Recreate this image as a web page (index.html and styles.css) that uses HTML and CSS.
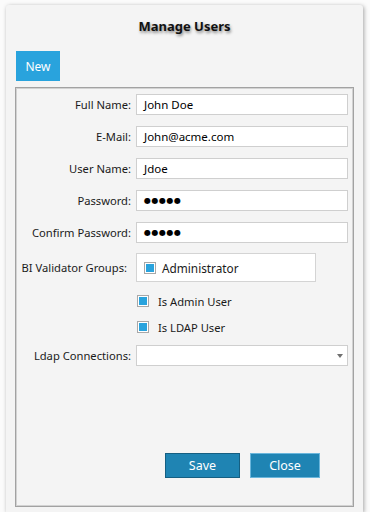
FILE: index.html
```html
<!DOCTYPE html>
<html>
<head>
<meta charset="utf-8">
<link rel="stylesheet" href="styles.css">
</head>
<body>
<div class="window">
  <div class="title">Manage Users</div>
  <div class="toolbar"><button class="btn-new">New</button></div>
  <div class="group">
    <div class="row r1"><label class="lbl">Full Name:</label><div class="input">John Doe</div></div>
    <div class="row r2"><label class="lbl">E-Mail:</label><div class="input">John@acme.com</div></div>
    <div class="row r2"><label class="lbl">User Name:</label><div class="input">Jdoe</div></div>
    <div class="row r2"><label class="lbl">Password:</label><div class="input pw">●●●●●</div></div>
    <div class="row r2"><label class="lbl">Confirm Password:</label><div class="input pw">●●●●●</div></div>
    <div class="row rg"><label class="lbl lbl-g">BI Validator Groups:</label>
      <div class="groups"><span class="cb"><span class="cb-fill"></span></span><span class="cb-text">Administrator</span></div>
    </div>
    <div class="row rc1"><span class="lbl"></span><div class="check"><span class="cb"><span class="cb-fill"></span></span><span class="check-text">Is Admin User</span></div></div>
    <div class="row rc2"><span class="lbl"></span><div class="check"><span class="cb"><span class="cb-fill"></span></span><span class="check-text">Is LDAP User</span></div></div>
    <div class="row rl"><label class="lbl">Ldap Connections:</label><div class="input combo"><span class="arrow"></span></div></div>
    <div class="actions">
      <button class="btn btn-save">Save</button>
      <button class="btn btn-close">Close</button>
    </div>
  </div>
</div>
</body>
</html>
```

FILE: styles.css
```css
html, body {
  margin: 0;
  padding: 0;
  background: #fbfbfb;
  overflow: hidden;
  height: 512px;
}
body {
  font-family: "Noto Sans", "Open Sans", sans-serif;
  font-size: 11.2px;
  color: #1a1a1a;
}
.window {
  margin: 5px 7px 0 6px;
  height: 507px;
  background: #f4f4f4;
  border-radius: 3px 3px 0 0;
  box-shadow: 1px 1px 4px rgba(0,0,0,0.35);
  padding: 0 9px;
  box-sizing: border-box;
  display: flex;
  flex-direction: column;
}
.title {
  text-align: center;
  font-weight: bold;
  font-size: 13px;
  color: #111;
  height: 41px;
  line-height: 42px;
  text-shadow: 1px 2px 3px rgba(0,0,0,0.45);
}
.toolbar {
  height: 30px;
  margin-top: 5px;
  display: flex;
}
.btn-new {
  margin-left: 1px;
  width: 44px;
  height: 30px;
  border: none;
  background: #29a3dd;
  color: #fff;
  font-family: inherit;
  font-size: 12px;
  padding: 0;
}
.group {
  margin-top: 6px;
  height: 420px;
  flex: none;
  box-sizing: border-box;
  border: 1px solid #a2a2a2;
  box-shadow: inset 0 0 0 1px #d2d2d2;
  background: #f4f4f4;
  padding: 6px 5px 28px 1px;
  display: flex;
  flex-direction: column;
}
.row {
  display: flex;
  align-items: center;
}
.r1 { margin-top: 0; }
.r2 { margin-top: 11px; }
.rg { margin-top: 10px; }
.rc1 { margin-top: 10px; height: 18px; }
.rc2 { margin-top: 8px; height: 18px; }
.rl { margin-top: 9px; }
.lbl {
  width: 114px;
  flex: none;
  text-align: right;
  margin-right: 5px;
  white-space: nowrap;
  color: #1a1a1a;
}
.lbl-g { padding-right: 4px; box-sizing: border-box; }
.input {
  flex: 1;
  height: 21px;
  box-sizing: border-box;
  border: 1px solid #cfcfcf;
  background: #fff;
  padding-left: 7px;
  line-height: 19px;
  color: #000;
  font-size: 11.5px;
}
.pw {
  font-size: 8px;
  letter-spacing: 0.5px;
  font-family: "DejaVu Sans", sans-serif;
}
.groups {
  width: 180px;
  height: 29px;
  box-sizing: border-box;
  border: 1px solid #d4d4d4;
  background: #fff;
  display: flex;
  align-items: center;
  padding-left: 7px;
}
.cb {
  width: 12px;
  height: 12px;
  box-sizing: border-box;
  border: 1px solid #a8a8a8;
  background: #fff;
  display: flex;
  align-items: center;
  justify-content: center;
  flex: none;
}
.cb-fill {
  width: 8px;
  height: 8px;
  background: #29a3dd;
}
.cb-text {
  margin-left: 6px;
  font-size: 11.8px;
  color: #1a1a1a;
}
.check {
  display: flex;
  align-items: center;
  margin-left: 1px;
}
.check-text {
  margin-left: 9px;
  color: #1a1a1a;
}
.combo {
  position: relative;
}
.arrow {
  position: absolute;
  right: 4px;
  top: 8px;
  width: 0;
  height: 0;
  border-left: 3px solid transparent;
  border-right: 3px solid transparent;
  border-top: 4px solid #707070;
}
.actions {
  margin-top: auto;
  display: flex;
  justify-content: flex-end;
  gap: 10px;
  padding-right: 28px;
}
.btn {
  height: 25px;
  box-sizing: border-box;
  font-family: inherit;
  font-size: 12.5px;
  color: #fff;
  background: #1f84b3;
  padding: 0;
}
.btn-save {
  width: 75px;
  border: 1px solid #155f82;
}
.btn-close {
  width: 70px;
  border: 1px solid #6ab6dc;
}
```
